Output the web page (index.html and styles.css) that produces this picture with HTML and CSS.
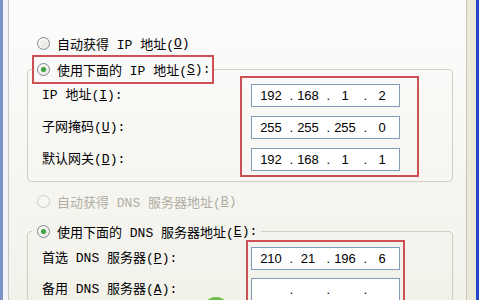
FILE: index.html
```html
<!DOCTYPE html>
<html lang="zh-CN">
<head>
    <meta charset="UTF-8">
    <title>Internet 协议 (TCP/IP) 属性</title>
    <link rel="stylesheet" href="styles.css">
</head>
<body>

    <div class="window">
        <div class="frame-left"></div>
        <div class="gutter"></div>

        <div class="page">
            <!-- IP address -->
            <div class="option first">
                <span class="radio"></span>自动获得 IP 地址(<u>O</u>)
            </div>

            <fieldset class="group group-ip">
                <legend class="marked">
                    <div class="option"><span class="radio checked"></span>使用下面的 IP 地址(<u>S</u>):</div>
                </legend>
                <div class="group-body">
                    <div class="labels">
                        <div class="label">IP 地址(<u>I</u>):</div>
                        <div class="label">子网掩码(<u>U</u>):</div>
                        <div class="label">默认网关(<u>D</u>):</div>
                    </div>
                    <div class="redbox">
                        <div class="ipbox"><span class="oct">192</span><span class="dot">.</span><span class="oct">168</span><span class="dot">.</span><span class="oct">1</span><span class="dot">.</span><span class="oct">2</span></div>
                        <div class="ipbox"><span class="oct">255</span><span class="dot">.</span><span class="oct">255</span><span class="dot">.</span><span class="oct">255</span><span class="dot">.</span><span class="oct">0</span></div>
                        <div class="ipbox"><span class="oct">192</span><span class="dot">.</span><span class="oct">168</span><span class="dot">.</span><span class="oct">1</span><span class="dot">.</span><span class="oct">1</span></div>
                    </div>
                </div>
            </fieldset>

            <!-- DNS -->
            <div class="option disabled">
                <span class="radio"></span>自动获得 DNS 服务器地址(<u>B</u>)
            </div>

            <fieldset class="group group-dns">
                <legend>
                    <div class="option"><span class="radio checked"></span>使用下面的 DNS 服务器地址(<u>E</u>):</div>
                </legend>
                <div class="group-body">
                    <div class="labels">
                        <div class="label">首选 DNS 服务器(<u>P</u>):</div>
                        <div class="label">备用 DNS 服务器(<u>A</u>):</div>
                    </div>
                    <div class="redbox">
                        <div class="ipbox"><span class="oct">210</span><span class="dot">.</span><span class="oct">21</span><span class="dot">.</span><span class="oct">196</span><span class="dot">.</span><span class="oct">6</span></div>
                        <div class="ipbox"><span class="oct"></span><span class="dot">.</span><span class="oct"></span><span class="dot">.</span><span class="oct"></span><span class="dot">.</span><span class="oct"></span></div>
                    </div>
                </div>
            </fieldset>

            <div class="watermark"></div>
        </div>

        <div class="gutter-right"></div>
        <div class="frame-right"></div>
        <div class="edge"></div>
    </div>

</body>
</html>
```

FILE: styles.css
```css
body {
    margin: 0;
    width: 480px;
    height: 300px;
    overflow: hidden;
    font-family: "Liberation Mono", "Noto Sans CJK SC", monospace;
    font-size: 13px;
    color: #000;
}
.window {
    display: flex;
    height: 300px;
}
.frame-left {
    width: 3px;
    background: #7b93c4;
}
.gutter {
    width: 5px;
    background: #f3f5fa;
}
.page {
    position: relative;
    width: 459px;
    box-sizing: border-box;
    padding: 34px 0 0 18px;
    border-left: 1px solid #c5c8c8;
    border-right: 1px solid #c5c5bd;
    background: linear-gradient(#fcfcfc, #f2f1ea); /* xp tab page */
}
.gutter-right {
    width: 9px;
    background: #ece9d8;
}
.frame-right {
    width: 3px;
    background: #2445c8;
}
.edge {
    width: 1px;
    background: #fff;
}

/* radio options */
.option {
    display: flex;
    align-items: center;
    height: 18px;
    white-space: nowrap;
}
.option.first {
    margin-left: 10px;
}
.option.disabled {
    margin: 10px 0 0 10px;
    color: #b0aea2;
}
.radio {
    position: relative;
    width: 13px;
    height: 13px;
    box-sizing: border-box;
    margin-right: 7px;
    border: 1px solid #7f8a93;
    border-radius: 50%;
    background: radial-gradient(circle at 60% 60%, #e6e5df, #fff);
}
.radio.checked::after {
    content: "";
    position: absolute;
    left: 3px;
    top: 3px;
    width: 5px;
    height: 5px;
    border-radius: 50%;
    background: #3aa33a;
}
.disabled .radio {
    border-color: #cdcbc0;
    background: #f7f6f2;
}

/* group boxes */
.group {
    width: 426px;
    box-sizing: border-box;
    min-width: 0;
    margin: 3px 0 0 0;
    padding: 0 0 4px 0;
    border: 1px solid #d0d0bf;
    border-radius: 4px;
}
.group-dns {
    margin-top: 7px;
}
legend {
    margin-left: 4px;
    padding: 0 2px 0 3px;
    border: 2px solid transparent;
}
legend .option {
    height: 25px;
}
legend.marked {
    border-color: #cc5054;
}
.group-body {
    display: flex;
    margin-top: -8px;
    padding-left: 14px;
}
.group-dns .group-body {
    margin-top: -6px;
}
.labels {
    display: flex;
    flex-direction: column;
    gap: 9px;
    width: 198px;
    padding-top: 8px;
}
.group-dns .labels {
    width: 204px;
    padding-top: 7px;
    gap: 8px;
}
.label {
    height: 23px;
    line-height: 23px;
    white-space: nowrap;
}
.redbox {
    display: flex;
    flex-direction: column;
    gap: 9px;
    padding: 6px 17px 4px 9px;
    border: 2px solid #cc5054;
}
.group-dns .redbox {
    gap: 8px;
    padding: 5px 3px 4px 3px;
}

/* ip address control */
.ipbox {
    display: flex;
    width: 149px;
    height: 23px;
    box-sizing: border-box;
    padding-left: 4px;
    border: 1px solid #7f9db9;
    background: #fff;
    font-family: "Liberation Sans", sans-serif;
    font-size: 13px;
    line-height: 21px;
}
.oct {
    width: 30px;
    text-align: center;
}
.dot {
    width: 7px;
    text-align: right;
}

.watermark {
    position: absolute;
    left: 198px;
    top: 297px;
    width: 18px;
    height: 10px;
    border-radius: 50%;
    background: #6cc24f;
}
```
